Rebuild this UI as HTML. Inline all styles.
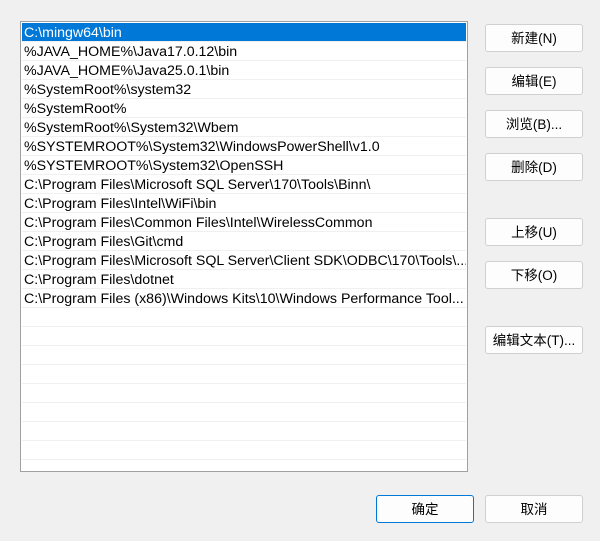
<!DOCTYPE html>
<html><head><meta charset="utf-8"><style>
body{margin:0;width:600px;height:541px;background:#f0f0f0;font-family:"Liberation Sans","Noto Sans CJK SC",sans-serif;position:relative;overflow:hidden}
.list{position:absolute;left:20px;top:21px;width:446px;height:449px;background:#fff;border:1px solid #a0a0a0}
.row{position:absolute;left:1px;width:444px;height:19px;line-height:20px;font-size:14.2px;color:#000;padding-left:2px;box-sizing:border-box;border-bottom:1px solid #f0f0f0;white-space:nowrap;overflow:hidden}
.sel{background:#0078d7;color:#fff}
.btn{position:absolute;left:485px;width:98px;height:28px;background:#fdfdfd;border:1px solid #d0d0d0;border-radius:3px;box-sizing:border-box;font-size:13.5px;text-align:center;line-height:28px;color:#000}
</style></head><body>
<div class="list">
<div class="row sel" style="top:1px">C:\mingw64\bin</div>
<div class="row" style="top:20px">%JAVA_HOME%\Java17.0.12\bin</div>
<div class="row" style="top:39px">%JAVA_HOME%\Java25.0.1\bin</div>
<div class="row" style="top:58px">%SystemRoot%\system32</div>
<div class="row" style="top:77px">%SystemRoot%</div>
<div class="row" style="top:96px">%SystemRoot%\System32\Wbem</div>
<div class="row" style="top:115px">%SYSTEMROOT%\System32\WindowsPowerShell\v1.0</div>
<div class="row" style="top:134px">%SYSTEMROOT%\System32\OpenSSH</div>
<div class="row" style="top:153px">C:\Program Files\Microsoft SQL Server\170\Tools\Binn\</div>
<div class="row" style="top:172px">C:\Program Files\Intel\WiFi\bin</div>
<div class="row" style="top:191px">C:\Program Files\Common Files\Intel\WirelessCommon</div>
<div class="row" style="top:210px">C:\Program Files\Git\cmd</div>
<div class="row" style="top:229px">C:\Program Files\Microsoft SQL Server\Client SDK\ODBC\170\Tools\...</div>
<div class="row" style="top:248px">C:\Program Files\dotnet</div>
<div class="row" style="top:267px">C:\Program Files (x86)\Windows Kits\10\Windows Performance Tool...</div>
<div class="row" style="top:286px"></div><div class="row" style="top:305px"></div><div class="row" style="top:324px"></div><div class="row" style="top:343px"></div><div class="row" style="top:362px"></div><div class="row" style="top:381px"></div><div class="row" style="top:400px"></div><div class="row" style="top:419px"></div>
</div>
<div class="btn" style="top:24px">新建(N)</div>
<div class="btn" style="top:67px">编辑(E)</div>
<div class="btn" style="top:110px">浏览(B)...</div>
<div class="btn" style="top:153px">删除(D)</div>
<div class="btn" style="top:218px">上移(U)</div>
<div class="btn" style="top:261px">下移(O)</div>
<div class="btn" style="top:326px">编辑文本(T)...</div>
<div class="btn" style="top:495px;left:376px;border-color:#0078d7">确定</div>
<div class="btn" style="top:495px">取消</div>
</body></html>
